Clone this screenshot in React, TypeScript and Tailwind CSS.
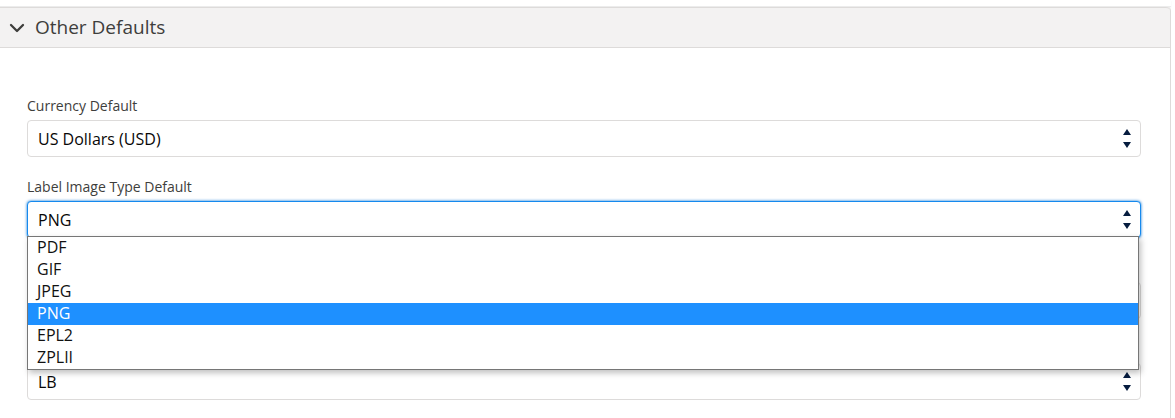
import { ChevronDown } from 'lucide-react';

const font = 'font-["Open_Sans","Liberation_Sans",sans-serif]';

function Arrows() {
  return (
    <svg width="8" height="20" viewBox="0 0 8 20" className="shrink-0">
      <path d="M4 0 L8 6 L0 6 Z" fill="#061c3f" />
      <path d="M0 13 L8 13 L4 19 Z" fill="#061c3f" />
    </svg>
  );
}

// label/value may be left out for fields hidden behind the open list
function SelectField({ label, value, focused }: { label?: string; value?: string; focused?: boolean }) {
  return (
    <div className="mb-[21px]">
      <div className="h-[18px] text-[14px] leading-[18px] text-[#3e3e3c] mb-[5px]">{label}</div>
      <div
        className={
          'h-[37px] rounded-[4px] border bg-white flex items-center justify-between pl-[10px] pr-[9px] ' +
          (focused ? 'border-[#1589ee] shadow-[0_0_3px_#0070d2]' : 'border-[#dddbda]')
        }
      >
        <span className="text-[16px] text-[#080707]">{value}</span>
        <Arrows />
      </div>
    </div>
  );
}

const options = ['PDF', 'GIF', 'JPEG', 'PNG', 'EPL2', 'ZPLII'];

export default function App() {
  return (
    <div className={`w-[1175px] h-[418px] bg-white relative overflow-hidden ${font}`}>
      <div className="h-[7px] w-[1171px] border-b border-[#ececec] shadow-[0_1px_2px_rgba(0,0,0,0.05)]" />

      <div className="w-[1171px] border-r border-[#dddbda] h-[411px] rounded-tr-[4px]">
        {/* Section header */}
        <div className="h-[41px] bg-[#f3f2f2] border-y border-[#dddbda] rounded-tr-[4px] flex items-center pl-[5px] gap-[6px]">
          <ChevronDown className="w-[24px] h-[24px] text-[#3e3e3c]" strokeWidth={2.3} />
          <span className="text-[19px] text-[#3e3e3c]">Other Defaults</span>
        </div>

        {/* Fields */}
        <div className="pl-[27px] pr-[29px] pt-[49px]">
          <SelectField label="Currency Default" value="US Dollars (USD)" />
          <SelectField label="Label Image Type Default" value="PNG" focused />
          <SelectField />
          <SelectField value="LB" />
        </div>
      </div>

      {/* Open option list */}
      <div className="absolute left-[27px] top-[236px] w-[1112px] bg-white border border-[#767676] shadow-[2px_3px_6px_rgba(0,0,0,0.25)]">
        {options.map((o) => (
          <div
            key={o}
            className={
              'h-[22px] leading-[21px] pl-[9px] text-[16px] ' +
              (o === 'PNG' ? 'bg-[#1e90ff] text-white' : 'text-[#111]')
            }
          >
            {o}
          </div>
        ))}
      </div>
    </div>
  );
}
